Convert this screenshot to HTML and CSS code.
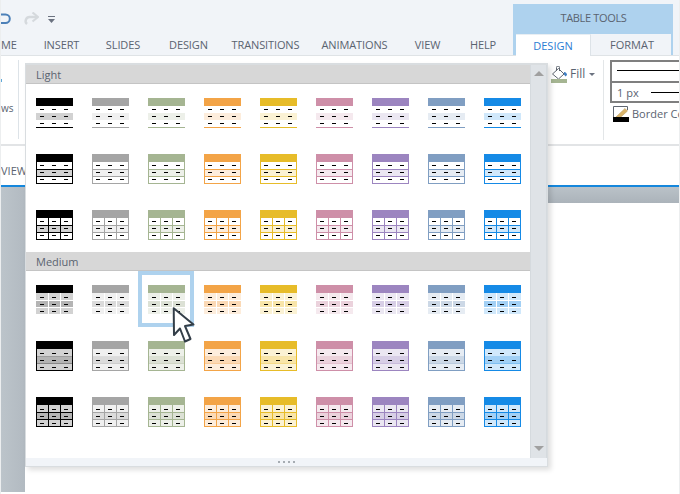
FILE: index.html
```html
<!DOCTYPE html>
<html lang="en">
<head>
<meta charset="utf-8">
<title>Table Tools</title>
<link rel="stylesheet" href="styles.css">
</head>
<body>
<svg class="defs" aria-hidden="true">
  <symbol id="dl" viewBox="0 0 37 30"><path class="d" d="M4 11.500h4M16 11.500h4M28 11.500h4M4 18.500h4M16 18.500h4M28 18.500h4M4 25.500h4M16 25.500h4M28 25.500h4"/></symbol>
  <symbol id="dm" viewBox="0 0 37 30"><path class="d" d="M4 12.500h4M16 12.500h4M28 12.500h4M4 19.500h4M16 19.500h4M28 19.500h4M4 26.500h4M16 26.500h4M28 26.500h4"/></symbol>
  <symbol id="l1" viewBox="0 0 37 30"><rect class="h" width="37" height="8"/><rect class="a" y="15" width="37" height="7"/><rect class="h" y="29" width="37" height="1"/><use href="#dl"/></symbol>
  <symbol id="l2" viewBox="0 0 37 30"><rect class="h" width="37" height="8"/><rect class="a" y="15" width="37" height="8"/><path class="l" d="M.5 8V29.500H36.500V8M0 15.500H37M0 22.500H37"/><use href="#dl"/></symbol>
  <symbol id="l3" viewBox="0 0 37 30"><rect class="h" width="37" height="8"/><rect class="a" y="15" width="37" height="8"/><path class="l" d="M.5 8V29.500H36.500V8M0 15.500H37M0 22.500H37M12.500 8V29M24.500 8V29"/><use href="#dl"/></symbol>
  <symbol id="m1" viewBox="0 0 37 30"><rect class="h" width="37" height="8"/><path class="a" d="M0 8h12v7H0zM13 8h11v7H13zM25 8h12v7H25zM0 23h12v6H0zM13 23h11v6H13zM25 23h12v6H25z"/><path class="b" d="M0 16h12v6H0zM13 16h11v6H13zM25 16h12v6H25z"/><use href="#dm"/></symbol>
  <symbol id="m2" viewBox="0 0 37 30"><rect class="h" width="37" height="8"/><rect class="a" y="8" width="37" height="22"/><rect class="b" y="16" width="37" height="7"/><path class="f" d="M0 15.500H37M0 22.500H37"/><path class="l" d="M.5 8V29.500H36.500V8"/><use href="#dm"/></symbol>
  <symbol id="m3" viewBox="0 0 37 30"><rect class="h" width="37" height="8"/><rect class="a" y="8" width="37" height="22"/><rect class="b" y="16" width="37" height="7"/><path class="l" d="M.5 8V29.500H36.500V8M0 15.500H37M0 22.500H37M12.500 8V29M24.500 8V29"/><use href="#dm"/></symbol>
</svg>

<div class="window">
  <header class="chrome">
    <div class="chrome-main">
      <div class="qat">
        <svg class="undo" width="12" height="16" viewBox="0 0 12 16"><path d="M-1 3.500H4.500a4.300 4.300 0 0 1 0 8.600H-1" fill="none" stroke="#4c80b8" stroke-width="2"/></svg>
        <svg class="redo" width="16" height="14" viewBox="0 0 16 14"><path d="M14 5H7a4 4 0 0 0-3 7" fill="none" stroke="#d5d9dd" stroke-width="2.400"/><path d="M9.500 0.500L15 5L9.500 9.500" fill="none" stroke="#d5d9dd" stroke-width="2.200"/></svg>
        <svg class="qat-more" width="8" height="7" viewBox="0 0 8 7"><path d="M0 0h7v1H0zM0 3h7L3.500 7z" fill="#6b7280"/></svg>
      </div>
      <nav class="tabs">
        <span class="tab tab-cut">ME</span>
        <span class="tab">INSERT</span>
        <span class="tab">SLIDES</span>
        <span class="tab">DESIGN</span>
        <span class="tab">TRANSITIONS</span>
        <span class="tab">ANIMATIONS</span>
        <span class="tab">VIEW</span>
        <span class="tab">HELP</span>
      </nav>
    </div>
    <div class="ctx">
      <div class="ctx-title">TABLE TOOLS</div>
      <div class="ctx-tabs">
        <span class="ctx-tab active">DESIGN</span>
        <span class="ctx-tab">FORMAT</span>
      </div>
    </div>
  </header>

  <section class="ribbon">
    <div class="rb-left">
      <span class="rb-mark"></span>
      <span class="rb-frag">ws</span>
    </div>
    <div class="rb-right">
      <div class="fill-group">
        <svg class="fill-icon" width="17" height="18" viewBox="0 0 17 18">
          <path d="M1.500 8L7.500 2.500L13 8L7.500 13z" fill="#fff" stroke="#5f6670"/>
          <path d="M5.500 5V1.500a1.500 1.500 0 0 1 3 0V5" fill="none" stroke="#5f6670"/>
          <path d="M13 6c2 0 3 1.500 3 3l-1.500 1.500-1.500-2z" fill="#3f7fc4"/>
          <rect x="0" y="13" width="16" height="4" fill="#a5b592"/>
        </svg>
        <span class="fill-label">Fill</span>
        <span class="caret"></span>
      </div>
      <div class="border-group">
        <div class="line-box line-style"><span class="line"></span></div>
        <div class="line-box line-weight"><span class="weight">1 px</span><span class="line"></span></div>
        <div class="border-color">
          <svg class="border-icon" width="16" height="16" viewBox="0 0 16 16">
            <path d="M0.500 11.500V0.500H14.500V4" fill="#fff" stroke="#5f6670"/>
            <path d="M3 11L12 2.500l2.500 2.500-9 8H3z" fill="#d9b46a" stroke="#b99a5c" stroke-width=".6"/>
            <rect x="0" y="11" width="16" height="5" fill="#000"/>
          </svg>
          <span class="border-label">Border Color</span>
        </div>
      </div>
    </div>
  </section>

  <div class="viewbar"><span class="view-tab">VIEW</span></div>

  <div class="workspace">
    <aside class="thumbs"></aside>
    <main class="stage"><div class="stage-band"></div></main>
  </div>

  <div class="popup">
    <div class="popup-body">
      <div class="gallery">
        <h2 class="sec-title">Light</h2>
        <div class="grid">
          <div class="swatch"><svg class="thumb black"><use href="#l1"/></svg></div>
          <div class="swatch"><svg class="thumb gray"><use href="#l1"/></svg></div>
          <div class="swatch"><svg class="thumb green"><use href="#l1"/></svg></div>
          <div class="swatch"><svg class="thumb orange"><use href="#l1"/></svg></div>
          <div class="swatch"><svg class="thumb yellow"><use href="#l1"/></svg></div>
          <div class="swatch"><svg class="thumb pink"><use href="#l1"/></svg></div>
          <div class="swatch"><svg class="thumb purple"><use href="#l1"/></svg></div>
          <div class="swatch"><svg class="thumb steel"><use href="#l1"/></svg></div>
          <div class="swatch"><svg class="thumb blue"><use href="#l1"/></svg></div>

          <div class="swatch"><svg class="thumb black"><use href="#l2"/></svg></div>
          <div class="swatch"><svg class="thumb gray"><use href="#l2"/></svg></div>
          <div class="swatch"><svg class="thumb green"><use href="#l2"/></svg></div>
          <div class="swatch"><svg class="thumb orange"><use href="#l2"/></svg></div>
          <div class="swatch"><svg class="thumb yellow"><use href="#l2"/></svg></div>
          <div class="swatch"><svg class="thumb pink"><use href="#l2"/></svg></div>
          <div class="swatch"><svg class="thumb purple"><use href="#l2"/></svg></div>
          <div class="swatch"><svg class="thumb steel"><use href="#l2"/></svg></div>
          <div class="swatch"><svg class="thumb blue"><use href="#l2"/></svg></div>

          <div class="swatch"><svg class="thumb black"><use href="#l3"/></svg></div>
          <div class="swatch"><svg class="thumb gray"><use href="#l3"/></svg></div>
          <div class="swatch"><svg class="thumb green"><use href="#l3"/></svg></div>
          <div class="swatch"><svg class="thumb orange"><use href="#l3"/></svg></div>
          <div class="swatch"><svg class="thumb yellow"><use href="#l3"/></svg></div>
          <div class="swatch"><svg class="thumb pink"><use href="#l3"/></svg></div>
          <div class="swatch"><svg class="thumb purple"><use href="#l3"/></svg></div>
          <div class="swatch"><svg class="thumb steel"><use href="#l3"/></svg></div>
          <div class="swatch"><svg class="thumb blue"><use href="#l3"/></svg></div>
        </div>
        <h2 class="sec-title">Medium</h2>
        <div class="grid">
          <div class="swatch"><svg class="thumb black"><use href="#m1"/></svg></div>
          <div class="swatch"><svg class="thumb gray"><use href="#m1"/></svg></div>
          <div class="swatch selected"><svg class="thumb green"><use href="#m1"/></svg></div>
          <div class="swatch"><svg class="thumb orange"><use href="#m1"/></svg></div>
          <div class="swatch"><svg class="thumb yellow"><use href="#m1"/></svg></div>
          <div class="swatch"><svg class="thumb pink"><use href="#m1"/></svg></div>
          <div class="swatch"><svg class="thumb purple"><use href="#m1"/></svg></div>
          <div class="swatch"><svg class="thumb steel"><use href="#m1"/></svg></div>
          <div class="swatch"><svg class="thumb blue"><use href="#m1"/></svg></div>

          <div class="swatch"><svg class="thumb black"><use href="#m2"/></svg></div>
          <div class="swatch"><svg class="thumb gray"><use href="#m2"/></svg></div>
          <div class="swatch"><svg class="thumb green"><use href="#m2"/></svg></div>
          <div class="swatch"><svg class="thumb orange"><use href="#m2"/></svg></div>
          <div class="swatch"><svg class="thumb yellow"><use href="#m2"/></svg></div>
          <div class="swatch"><svg class="thumb pink"><use href="#m2"/></svg></div>
          <div class="swatch"><svg class="thumb purple"><use href="#m2"/></svg></div>
          <div class="swatch"><svg class="thumb steel"><use href="#m2"/></svg></div>
          <div class="swatch"><svg class="thumb blue"><use href="#m2"/></svg></div>

          <div class="swatch"><svg class="thumb black"><use href="#m3"/></svg></div>
          <div class="swatch"><svg class="thumb gray"><use href="#m3"/></svg></div>
          <div class="swatch"><svg class="thumb green"><use href="#m3"/></svg></div>
          <div class="swatch"><svg class="thumb orange"><use href="#m3"/></svg></div>
          <div class="swatch"><svg class="thumb yellow"><use href="#m3"/></svg></div>
          <div class="swatch"><svg class="thumb pink"><use href="#m3"/></svg></div>
          <div class="swatch"><svg class="thumb purple"><use href="#m3"/></svg></div>
          <div class="swatch"><svg class="thumb steel"><use href="#m3"/></svg></div>
          <div class="swatch"><svg class="thumb blue"><use href="#m3"/></svg></div>
        </div>
      </div>
      <div class="scrollbar">
        <span class="arrow up"></span>
        <span class="arrow down"></span>
      </div>
    </div>
    <div class="grip"><i></i><i></i><i></i><i></i></div>
  </div>

  <svg class="cursor" width="26" height="38" viewBox="0 0 26 38"><path d="M2.700 1.300L22.500 17.500L14 19L19.500 32L14 34.500L9 21.500L3 28z" fill="#fff" stroke="#333e48" stroke-width="2" stroke-linejoin="round"/></svg>
</div>
</body>
</html>
```

FILE: styles.css
```css
* { box-sizing: border-box; }
html, body { margin: 0; padding: 0; background: #fff; }
body { font-family: "Open Sans", "Noto Sans", sans-serif; color: #5a6370; }
.defs { position: absolute; width: 0; height: 0; }

.window {
  position: relative;
  width: 680px;
  height: 494px;
  overflow: hidden;
  display: flex;
  flex-direction: column;
  background: #fff;
  border-left: 1px solid #eceeef;
  border-right: 1px solid #eceeef;
}

/* Title + tabs */
.chrome {
  height: 56px;
  flex: none;
  display: flex;
  background: #f1f4f8;
  border-bottom: 1px solid #dfe3e6;
  padding-right: 6px;
}
.chrome-main { width: 512px; display: flex; flex-direction: column; }
.qat { height: 34px; display: flex; align-items: flex-start; padding-top: 10px; }
.undo { margin-top: 1px; }
.redo { margin: 2px 0 0 10px; }
.qat-more { margin: 6px 0 0 9px; }
.tabs {
  display: grid;
  grid-template-columns: 29px 63px 60px 71px 83px 95px 51px 60px;
  font-size: 11px;
  line-height: 21px;
  padding-top: 1px;
  letter-spacing: -.12px;
}
.tab { text-align: center; white-space: nowrap; }
.tab-cut { text-align: left; }

.ctx {
  width: 160px;
  margin-top: 4px;
  height: 51px;
  background: #aed2ee;
  display: flex;
  flex-direction: column;
  padding: 0 2px 0 3px;
}
.ctx-title { height: 30px; line-height: 28px; font-size: 11px; text-align: center; letter-spacing: -.35px; }
.ctx-tabs { display: flex; height: 21px; font-size: 11px; line-height: 22px; text-align: center; background: #f1f4f8; }
.ctx-tab { width: 80px; padding-left: 2px; }
.ctx-tab.active {
  width: 75px;
  padding-left: 0;
  background: #fff;
  color: #2b7cd3;
  height: 22px;
  border-top: 1px solid #e8eef3;
  border-right: 1px solid #dde3e8;
  line-height: 21px;
  position: relative;
  z-index: 1;
}

/* Ribbon */
.ribbon {
  flex: none;
  height: 90px;
  display: flex;
  justify-content: space-between;
  border-bottom: 2px solid #e2e4e6;
}
.rb-left {
  width: 18px;
  margin: 4px 0 5px;
  border-right: 1px solid #dde3e8;
  display: flex;
  flex-direction: column;
  padding-top: 19px;
}
.rb-mark { width: 1px; height: 3px; background: #5ea8d8; }
.rb-frag { font-size: 10px; line-height: 12px; margin-top: 20px; }
.rb-right { width: 128px; display: flex; overflow: hidden; padding-top: 4px; }
.fill-group {
  width: 52px;
  height: 20px;
  margin-top: 5px;
  display: flex;
  align-items: flex-start;
  flex: none;
}
.fill-icon { flex: none; margin-top: 1px; }
.fill-label { font-size: 12px; line-height: 17px; margin-left: 2px; }
.caret { margin: 8px 0 0 4px; border: 3px solid transparent; border-top-color: #6b7280; }
.border-group {
  flex: none;
  width: 76px;
  border-left: 1px solid #e3e6e8;
  padding-left: 6px;
  height: 80px;
}
.line-box {
  width: 72px;
  display: flex;
  align-items: center;
  border: 2px solid #7f7f7f;
  border-right: 0;
}
.line-style { height: 23px; padding: 0 0 3px 5px; }
.line-weight { height: 20px; padding: 0 0 0 5px; border-top: 0; }
.line-style .line { flex: 1; height: 1px; background: #000; }
.line-weight .line { flex: 1; height: 1px; background: #000; margin-left: 12px; }
.weight { font-size: 11px; line-height: 16px; padding-top: 2px; white-space: nowrap; }
.border-color { display: flex; align-items: center; margin-top: 3px; padding-left: 3px; white-space: nowrap; }
.border-icon { flex: none; }
.border-label { font-size: 11px; line-height: 14px; margin-left: 3px; }

/* Below ribbon */
.viewbar {
  flex: none;
  height: 41px;
  border-bottom: 2px solid #1587dc;
  font-size: 11px;
}
.view-tab { display: block; line-height: 16px; margin-top: 17px; }
.workspace { flex: 1; display: flex; margin-bottom: 2px; }
.thumbs { width: 24px; flex: none; background: linear-gradient(90deg, #bcc4ca, #b2bac1); }
.stage { flex: 1; }
.stage-band { height: 16px; background: linear-gradient(180deg, #bac2c8, #abb3ba); }

/* Popup gallery */
.popup {
  position: absolute;
  left: 24px;
  top: 63px;
  width: 523px;
  height: 404px;
  background: #f1f4f8;
  border: 1px solid #d9dde0;
  border-top-width: 2px;
  box-shadow: 3px 3px 5px rgba(0, 0, 0, .13);
  display: flex;
  flex-direction: column;
}
.popup-body { height: 393px; display: flex; background: #fff; flex: none; }
.gallery { width: 504px; background: #fff; flex: none; }
.sec-title {
  margin: 0;
  height: 19px;
  padding-left: 10px;
  background: #d7d7d7;
  border-bottom: 1px solid #c4c4c4;
  font-size: 11px;
  font-weight: 400;
  line-height: 20px;
}
.grid { display: grid; grid-template-columns: repeat(9, 56px); grid-auto-rows: 56px; }
.swatch { padding: 14px 0 0 10px; }
.swatch.selected { box-shadow: inset 0 0 0 4px #aed2ee; }
.thumb { display: block; width: 37px; height: 30px; shape-rendering: crispEdges; }
.h { fill: var(--h); }
.a { fill: var(--a); }
.b { fill: var(--b); }
.l { fill: none; stroke: var(--h); stroke-width: 1; }
.f { fill: none; stroke: var(--h); stroke-width: 1; stroke-opacity: .25; }
.d { fill: none; stroke: #000; stroke-width: 1.100; shape-rendering: geometricPrecision; }

.black  { --h: #000000; --a: #d2d2d2; --b: #b4b4b4; }
.gray   { --h: #a5a5a5; --a: #f0f0f0; --b: #dbdbdb; }
.green  { --h: #a5b592; --a: #edf0e9; --b: #dce1d5; }
.orange { --h: #f3a447; --a: #fdeddc; --b: #fbd9b5; }
.yellow { --h: #e7bc29; --a: #fbf2d4; --b: #f8e5a9; }
.pink   { --h: #ce8fa8; --a: #f5e9ee; --b: #ebd2dc; }
.purple { --h: #9c85c0; --a: #ebe7f2; --b: #d7cee6; }
.steel  { --h: #809ec2; --a: #e6ecf3; --b: #ccd8e6; }
.blue   { --h: #158ae6; --a: #d0e8fb; --b: #a2d0f5; }

.scrollbar {
  width: 17px;
  background: #dfe3e7;
  border-left: 1px solid #d5dade;
  border-right: 1px solid #d5dade;
  display: flex;
  flex-direction: column;
  justify-content: space-between;
  align-items: center;
  padding: 6px 0 7px;
}
.arrow { width: 0; height: 0; border-left: 5px solid transparent; border-right: 5px solid transparent; }
.arrow.up { border-bottom: 5px solid #a0a0a0; }
.arrow.down { border-top: 5px solid #a0a0a0; }

.grip { flex: 1; display: flex; justify-content: center; align-items: center; gap: 3px; padding-bottom: 1px; }
.grip i { width: 2px; height: 2px; background: #a6acb2; }

.cursor { position: absolute; left: 170px; top: 307px; }
```
